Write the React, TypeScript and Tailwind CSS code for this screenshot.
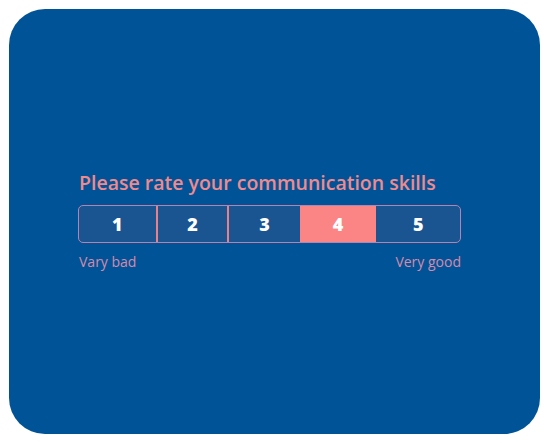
import React from "react";

const items = [
  { n: "1", w: "w-[77px]" },
  { n: "2", w: "w-[72px]" },
  { n: "3", w: "w-[73px]" },
  { n: "4", w: "w-[77px]" },
  { n: "5", w: "w-[84px]" },
];

export default function App() {
  return (
    <div className="w-[549px] h-[443px] bg-white p-[9px]" style={{ fontFamily: "'Open Sans', Lato, sans-serif" }}>
      <div className="w-[531px] h-[425px] rounded-[36px] bg-[#005396] pl-[69px] pt-[161px]">
        <div className="text-[19.5px] font-semibold text-[#f08a8e] leading-[26px] pl-[1px]">
          Please rate your communication skills
        </div>
        <div className="mt-[9px] flex w-[383px] h-[38px] rounded-[5px] border border-[#b583b0] bg-[#1a5592] overflow-hidden">
          {items.map((it, i) => (
            <div
              key={it.n}
              className={`${it.w} flex items-center justify-center text-white text-[18px] font-extrabold ${
                it.n === "4" ? "bg-[#fb8484]" : ""
              } ${i === 1 || i === 2 ? "border-l-2 border-[#e8818b]" : ""}`}
            >
              {it.n}
            </div>
          ))}
        </div>
        <div className="mt-[10px] flex w-[383px] justify-between text-[14px] font-medium text-[#d68aac] leading-[18px]">
          <span className="pl-[1px]">Vary bad</span>
          <span>Very good</span>
        </div>
      </div>
    </div>
  );
}
